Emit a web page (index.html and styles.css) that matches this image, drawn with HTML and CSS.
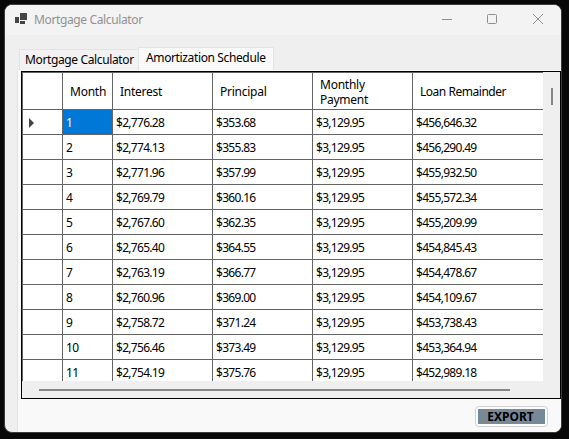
FILE: index.html
```html
<!DOCTYPE html>
<html lang="en">
<head>
<meta charset="utf-8">
<title>Mortgage Calculator</title>
<link rel="stylesheet" href="styles.css">
</head>
<body>
<main class="window">
  <header class="titlebar">
    <svg class="app-icon" width="13" height="12" viewBox="0 0 13 12" shape-rendering="crispEdges"><path fill="#444" d="M5 0h7v7H5zM0 4h4v6H0zM5 8h5v3H5z"/></svg>
    <span class="title">Mortgage Calculator</span>
    <svg class="controls" width="102" height="12" viewBox="0 0 102 12" fill="none" stroke="#8f8f8f"><path d="M0 6.5h10"/><rect x="45.5" y="1.5" width="9" height="9" rx="1"/><path d="M91 1l10 10M101 1L91 11"/></svg>
  </header>
  <nav class="tabs">
    <div class="tab"><span>Mortgage Calculator</span></div>
    <div class="tab active"><span>Amortization Schedule</span></div>
  </nav>
  <section class="page">
    <div class="grid">
      <div class="viewport">
        <table>
          <colgroup><col class="c-mark"><col class="c-month"><col class="c-money"><col class="c-money"><col class="c-money"><col class="c-last"></colgroup>
          <thead><tr><th></th><th>Month</th><th>Interest</th><th>Principal</th><th>Monthly<br>Payment</th><th class="tight">Loan Remainder</th></tr></thead>
          <tbody>
            <tr><td><i class="arrow"></i></td><td class="selected">1</td><td>$2,776.28</td><td>$353.68</td><td>$3,129.95</td><td>$456,646.32</td></tr>
            <tr><td></td><td>2</td><td>$2,774.13</td><td>$355.83</td><td>$3,129.95</td><td>$456,290.49</td></tr>
            <tr><td></td><td>3</td><td>$2,771.96</td><td>$357.99</td><td>$3,129.95</td><td>$455,932.50</td></tr>
            <tr><td></td><td>4</td><td>$2,769.79</td><td>$360.16</td><td>$3,129.95</td><td>$455,572.34</td></tr>
            <tr><td></td><td>5</td><td>$2,767.60</td><td>$362.35</td><td>$3,129.95</td><td>$455,209.99</td></tr>
            <tr><td></td><td>6</td><td>$2,765.40</td><td>$364.55</td><td>$3,129.95</td><td>$454,845.43</td></tr>
            <tr><td></td><td>7</td><td>$2,763.19</td><td>$366.77</td><td>$3,129.95</td><td>$454,478.67</td></tr>
            <tr><td></td><td>8</td><td>$2,760.96</td><td>$369.00</td><td>$3,129.95</td><td>$454,109.67</td></tr>
            <tr><td></td><td>9</td><td>$2,758.72</td><td>$371.24</td><td>$3,129.95</td><td>$453,738.43</td></tr>
            <tr><td></td><td>10</td><td>$2,756.46</td><td>$373.49</td><td>$3,129.95</td><td>$453,364.94</td></tr>
            <tr><td></td><td>11</td><td>$2,754.19</td><td>$375.76</td><td>$3,129.95</td><td>$452,989.18</td></tr>
          </tbody>
        </table>
      </div>
      <div class="vscroll"><div class="vthumb"></div></div>
      <div class="hscroll"><div class="hthumb"></div></div>
    </div>
    <button class="export"><span>EXPORT</span></button>
  </section>
</main>
</body>
</html>
```
FILE: styles.css
```css
* { box-sizing: border-box; }

body {
  margin: 0;
  width: 569px;
  height: 439px;
  padding: 4px 7px 7px 4px;
  overflow: hidden;
  background: #080808;
  color: #000;
  font: 12px/15px "Noto Sans", "Open Sans", sans-serif;
}

.window {
  height: 429px;
  display: flex;
  flex-direction: column;
  overflow: hidden;
  border: 1px solid #3c3c3c;
  border-radius: 8px;
  background: #efefef;
}

.titlebar {
  height: 30px;
  flex: none;
  display: flex;
  align-items: flex-start;
  background: #f3f3f3;
  color: #919191;
}
.app-icon { margin: 8px 0 0 10px; }
.title { margin: 7px 0 0 6px; letter-spacing: -0.37px; white-space: nowrap; }
.controls { margin: 8px 17px 0 auto; }

.tabs {
  height: 35px;
  flex: none;
  display: flex;
  align-items: flex-end;
  padding-left: 14px;
}
.tab {
  width: 119px;
  height: 21px;
  padding: 2px 0 0 5px;
  border: 1px solid #e3e3e3;
  border-width: 1px 0 0 1px;
  background: #f2f2f2;
  white-space: nowrap;
  letter-spacing: -0.37px;
}
.tab.active {
  width: 136px;
  height: 23px;
  padding: 2px 0 0 7px;
  border-width: 1px 1px 0 1px;
  background: #f9f9f9;
}

.page {
  flex: 1;
  display: flex;
  flex-direction: column;
  margin-left: 12px;
  padding: 1px 0 0 3px;
  border-left: 1px solid #e2e2e2;
  background: #f9f9f9;
}

.grid {
  height: 328px;
  width: 540px;
  flex: none;
  display: grid;
  grid-template: 309px 1fr / 521px 1fr;
  border: 1px solid #000;
  background: #efefef;
}
.viewport { overflow: hidden; background: #fff; border-top: 1px solid #646464; border-left: 1px solid #646464; }

table { width: 521px; table-layout: fixed; border-collapse: separate; border-spacing: 0; }
.c-mark { width: 40px; }
.c-month { width: 50px; }
.c-money { width: 100px; }
.c-last { width: 131px; }
th, td {
  height: 25px;
  border: 0 solid #646464;
  border-width: 0 1px 1px 0;
  vertical-align: middle;
  text-align: left;
  font-weight: normal;
  white-space: nowrap;
}
th { height: 37px; padding: 1px 0 0 7px; letter-spacing: -0.25px; }
th.tight { letter-spacing: -0.47px; }
td { padding: 1px 0 0 3px; letter-spacing: -0.7px; }
.selected { background: #0078d7; color: #fff; }
.arrow {
  display: block;
  margin-left: 3px;
  width: 0;
  height: 0;
  border: 5px solid transparent;
  border-left-color: #444;
  border-right: 0;
}

.vscroll { padding: 16px 0 0 8px; }
.vthumb { width: 2px; height: 17px; background: #868686; }
.hscroll { grid-column: 1 / -1; padding: 8px 0 0 17px; }
.hthumb { width: 471px; height: 2px; background: #868686; }

.export {
  width: 73px;
  height: 21px;
  margin: 7px 13px 0 auto;
  padding: 2px;
  border: 1px solid #d0d0d0;
  border-radius: 4px;
  background: #fdfdfd;
  color: #000;
  font: bold 12px/15px "Noto Sans", "Open Sans", sans-serif;
}
.export span { display: block; height: 15px; padding-right: 2px; background: #778899; letter-spacing: 0; }
```
